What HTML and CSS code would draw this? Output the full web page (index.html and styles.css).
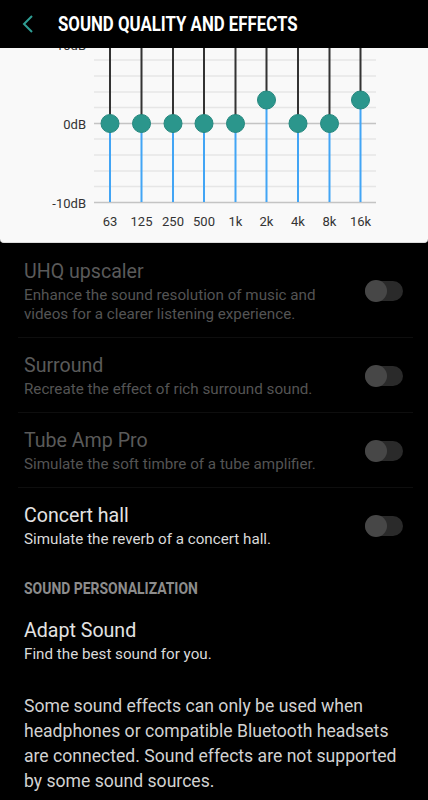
FILE: index.html
```html
<!DOCTYPE html>
<html lang="en">
<head>
<meta charset="utf-8">
<title>Sound quality and effects</title>
<link rel="stylesheet" href="styles.css">
</head>
<body>
<div class="screen">
  <header class="appbar">
    <svg class="back" width="14" height="20" viewBox="0 0 14 20"><path d="M11 2 L3 10 L11 18" fill="none" stroke="#2f9e94" stroke-width="2"/></svg>
    <h1 class="title"><span class="cond">SOUND QUALITY AND EFFECTS</span></h1>
  </header>

  <section class="eq-card">
    <svg class="eq" width="428" height="195" viewBox="0 48 428 195">
      <g class="grid" stroke="#e6e6e6" stroke-width="1.5">
        <line x1="94" x2="376" y1="60" y2="60"/>
        <line x1="94" x2="376" y1="76" y2="76"/>
        <line x1="94" x2="376" y1="92" y2="92"/>
        <line x1="94" x2="376" y1="107.5" y2="107.5"/>
        <line x1="94" x2="376" y1="139" y2="139"/>
        <line x1="94" x2="376" y1="155" y2="155"/>
        <line x1="94" x2="376" y1="171" y2="171"/>
        <line x1="94" x2="376" y1="186.5" y2="186.5"/>
      </g>
      <g stroke="#c4c4c4" stroke-width="1.5">
        <line x1="94" x2="376" y1="44.5" y2="44.5"/>
        <line x1="94" x2="376" y1="123.5" y2="123.5"/>
        <line x1="94" x2="376" y1="202.5" y2="202.5"/>
      </g>
      <g class="axis" font-family="Roboto, sans-serif" font-size="13" fill="#333" text-anchor="end">
        <text x="86" y="128.5">0dB</text>
        <text x="86" y="207.5">-10dB</text>
      </g>
      <g class="freq" font-family="Roboto, sans-serif" font-size="13" fill="#333" text-anchor="middle">
        <text x="110" y="226">63</text>
        <text x="141.5" y="226">125</text>
        <text x="173" y="226">250</text>
        <text x="204" y="226">500</text>
        <text x="235.5" y="226">1k</text>
        <text x="266.5" y="226">2k</text>
        <text x="298" y="226">4k</text>
        <text x="329.5" y="226">8k</text>
        <text x="360.5" y="226">16k</text>
      </g>
      <g stroke-width="2">
        <line x1="110" x2="110" y1="40" y2="123.5" stroke="#333"/><line x1="110" x2="110" y1="123.5" y2="202" stroke="#42a5f5"/><circle cx="110" cy="123.5" r="9" fill="#2b968c" stroke="#24877e" stroke-width="1"/>
        <line x1="141.5" x2="141.5" y1="40" y2="123.5" stroke="#333"/><line x1="141.5" x2="141.5" y1="123.5" y2="202" stroke="#42a5f5"/><circle cx="141.5" cy="123.5" r="9" fill="#2b968c" stroke="#24877e" stroke-width="1"/>
        <line x1="173" x2="173" y1="40" y2="123.5" stroke="#333"/><line x1="173" x2="173" y1="123.5" y2="202" stroke="#42a5f5"/><circle cx="173" cy="123.5" r="9" fill="#2b968c" stroke="#24877e" stroke-width="1"/>
        <line x1="204" x2="204" y1="40" y2="123.5" stroke="#333"/><line x1="204" x2="204" y1="123.5" y2="202" stroke="#42a5f5"/><circle cx="204" cy="123.5" r="9" fill="#2b968c" stroke="#24877e" stroke-width="1"/>
        <line x1="235.5" x2="235.5" y1="40" y2="123.5" stroke="#333"/><line x1="235.5" x2="235.5" y1="123.5" y2="202" stroke="#42a5f5"/><circle cx="235.5" cy="123.5" r="9" fill="#2b968c" stroke="#24877e" stroke-width="1"/>
        <line x1="266.5" x2="266.5" y1="40" y2="100" stroke="#333"/><line x1="266.5" x2="266.5" y1="100" y2="202" stroke="#42a5f5"/><circle cx="266.5" cy="100" r="9" fill="#2b968c" stroke="#24877e" stroke-width="1"/>
        <line x1="298" x2="298" y1="40" y2="123.5" stroke="#333"/><line x1="298" x2="298" y1="123.5" y2="202" stroke="#42a5f5"/><circle cx="298" cy="123.5" r="9" fill="#2b968c" stroke="#24877e" stroke-width="1"/>
        <line x1="329.5" x2="329.5" y1="40" y2="123.5" stroke="#333"/><line x1="329.5" x2="329.5" y1="123.5" y2="202" stroke="#42a5f5"/><circle cx="329.5" cy="123.5" r="9" fill="#2b968c" stroke="#24877e" stroke-width="1"/>
        <line x1="360.5" x2="360.5" y1="40" y2="100" stroke="#333"/><line x1="360.5" x2="360.5" y1="100" y2="202" stroke="#42a5f5"/><circle cx="360.5" cy="100" r="9" fill="#2b968c" stroke="#24877e" stroke-width="1"/>
      </g>
    </svg>
    <span class="top-label">10dB</span>
  </section>

  <ul class="list">
    <li class="item disabled first">
      <div class="text">
        <div class="label">UHQ upscaler</div>
        <div class="sub">Enhance the sound resolution of music and videos for a clearer listening experience.</div>
      </div>
      <span class="switch"><span class="thumb"></span></span>
    </li>
    <li class="item disabled">
      <div class="text">
        <div class="label">Surround</div>
        <div class="sub">Recreate the effect of rich surround sound.</div>
      </div>
      <span class="switch"><span class="thumb"></span></span>
    </li>
    <li class="item disabled">
      <div class="text">
        <div class="label">Tube Amp Pro</div>
        <div class="sub">Simulate the soft timbre of a tube amplifier.</div>
      </div>
      <span class="switch"><span class="thumb"></span></span>
    </li>
    <li class="item last">
      <div class="text">
        <div class="label">Concert hall</div>
        <div class="sub">Simulate the reverb of a concert hall.</div>
      </div>
      <span class="switch"><span class="thumb"></span></span>
    </li>
  </ul>

  <h2 class="section"><span class="cond">SOUND PERSONALIZATION</span></h2>

  <div class="item plain">
    <div class="text">
      <div class="label">Adapt Sound</div>
      <div class="sub">Find the best sound for you.</div>
    </div>
  </div>

  <p class="note">Some sound effects can only be used when headphones or compatible Bluetooth headsets are connected. Sound effects are not supported by some sound sources.</p>
</div>
</body>
</html>
```

FILE: styles.css
```css
* { box-sizing: border-box; }
html, body { margin: 0; padding: 0; background: #000; }
body { font-family: Roboto, "Noto Sans", sans-serif; color: #e0e0e0; }
.screen { width: 428px; height: 800px; overflow: hidden; background: #000; }

.appbar {
  height: 48px;
  display: flex;
  align-items: center;
  background: #000;
  position: relative;
  z-index: 2;
}
.back { margin-left: 21px; margin-right: 23px; display: block; }
.title {
  margin: 0;
  font-size: 20px;
  font-weight: 700;
  color: #fff;
  line-height: 24px;
  white-space: nowrap;
}
.cond { display: inline-block; transform: scaleX(0.84); transform-origin: left center; }

.eq-card {
  position: relative;
  height: 195px;
  background: #f9f9f9;
  border-bottom: 1px solid #dcdcdc;
  border-radius: 0 0 4px 4px;
  overflow: hidden;
}
.eq { display: block; }
.top-label {
  position: absolute;
  right: 342px;
  top: -9px;
  font-size: 13px;
  line-height: 13px;
  color: #333;
}

.list { list-style: none; margin: 0; padding: 0; }
.item {
  display: flex;
  align-items: center;
  padding: 14px 10px 13px 6px;
  border-bottom: 1px solid #0e0e0e;
  margin: 0 15px 0 18px;
}
.item.first { padding-top: 15px; }
.item.last { border-bottom: none; }
.text { flex: 1; min-width: 0; }
.label { font-size: 19.6px; line-height: 28px; color: #e3e3e3; }
.sub { font-size: 15.2px; line-height: 19px; color: #dadada; padding-right: 30px; }
.disabled .label { color: #5a5a5a; }
.disabled .sub { color: #545454; }

.switch {
  position: relative;
  width: 38px;
  height: 20px;
  border-radius: 10px;
  background: #2a2a2a;
  flex: none;
}
.thumb {
  position: absolute;
  left: 0;
  top: -1px;
  width: 22px;
  height: 22px;
  border-radius: 50%;
  background: #474747;
}

.section {
  margin: 0;
  padding: 16px 24px 0;
  font-size: 16.6px;
  line-height: 22px;
  font-weight: 700;
  color: #8c8c8c;
  white-space: nowrap;
}
.item.plain { border-bottom: none; padding-top: 17px; padding-bottom: 0; }
.note {
  margin: 30px 0 0;
  padding: 0 24px;
  font-size: 17.6px;
  line-height: 25px;
  color: #d2d2d2;
}
```
